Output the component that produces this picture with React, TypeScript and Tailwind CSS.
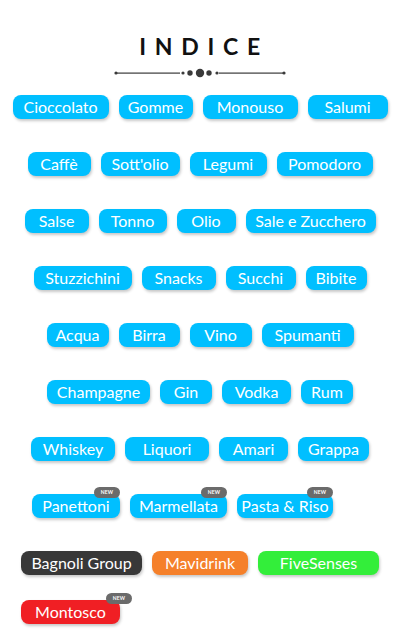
import React from "react";

type Pill = { label: string; w: number; isNew?: boolean };

const rows: Pill[][] = [
  [
    { label: "Cioccolato", w: 96 },
    { label: "Gomme", w: 74 },
    { label: "Monouso", w: 95 },
    { label: "Salumi", w: 80 },
  ],
  [
    { label: "Caffè", w: 63 },
    { label: "Sott'olio", w: 79 },
    { label: "Legumi", w: 77 },
    { label: "Pomodoro", w: 96 },
  ],
  [
    { label: "Salse", w: 64 },
    { label: "Tonno", w: 68 },
    { label: "Olio", w: 59 },
    { label: "Sale e Zucchero", w: 130 },
  ],
  [
    { label: "Stuzzichini", w: 98 },
    { label: "Snacks", w: 74 },
    { label: "Succhi", w: 70 },
    { label: "Bibite", w: 61 },
  ],
  [
    { label: "Acqua", w: 62 },
    { label: "Birra", w: 61 },
    { label: "Vino", w: 62 },
    { label: "Spumanti", w: 92 },
  ],
  [
    { label: "Champagne", w: 103 },
    { label: "Gin", w: 52 },
    { label: "Vodka", w: 69 },
    { label: "Rum", w: 52 },
  ],
  [
    { label: "Whiskey", w: 84 },
    { label: "Liquori", w: 84 },
    { label: "Amari", w: 69 },
    { label: "Grappa", w: 71 },
  ],
];

function NewBadge({ outside }: { outside?: boolean }) {
  return (
    <span
      className={
        "absolute top-[-7px] flex h-[11px] w-[26px] items-center justify-center rounded-full bg-[#6b6b6b] text-[5px] font-bold leading-none tracking-[0.05em] text-white " +
        (outside ? "right-[-12px]" : "right-0")
      }
    >
      NEW
    </span>
  );
}

function BluePill({ p }: { p: Pill }) {
  return (
    <div
      className="relative flex h-[24px] items-center justify-center rounded-lg bg-[#00bfff] text-[16px] leading-none text-white shadow-[1px_2px_3px_rgba(0,0,0,0.22)]"
      style={{ width: p.w }}
    >
      {p.label}
      {p.isNew && <NewBadge />}
    </div>
  );
}

function BrandPill({
  label,
  w,
  color,
  isNew,
}: {
  label: string;
  w: number;
  color: string;
  isNew?: boolean;
}) {
  return (
    <div
      className={
        "relative flex h-[24px] items-center justify-center rounded-lg text-[16px] leading-none text-white shadow-[1px_2px_3px_rgba(0,0,0,0.22)] " +
        color
      }
      style={{ width: w }}
    >
      {label}
      {isNew && <NewBadge outside />}
    </div>
  );
}

function Divider() {
  return (
    <svg width="172" height="10" viewBox="0 0 172 10" className="block">
      <g fill="#3a3a3a">
        <circle cx="2" cy="5" r="1.6" />
        <rect x="2" y="4.5" width="64" height="1.2" />
        <circle cx="69" cy="5" r="1.6" />
        <circle cx="76" cy="5" r="2.7" />
        <circle cx="86" cy="5" r="4.2" />
        <circle cx="95" cy="5" r="2.7" />
        <circle cx="103" cy="5" r="1.6" />
        <rect x="105" y="4.5" width="65" height="1.2" />
        <circle cx="170" cy="5" r="1.6" />
      </g>
    </svg>
  );
}

export default function App() {
  return (
    <div
      className="h-[640px] w-[400px] overflow-hidden bg-white"
      style={{ fontFamily: "Lato, 'Noto Sans', sans-serif" }}
    >
      <div className="flex flex-col items-center pt-[33px]">
        <h1 className="pl-[8px] text-[23px] font-bold leading-[26px] tracking-[0.38em] text-[#111]">
          INDICE
        </h1>
        <div className="mt-[9px]">
          <Divider />
        </div>
      </div>

      <div className="mt-[17px] flex flex-col gap-[33px]">
        {rows.map((row, i) => (
          <div key={i} className="flex justify-center gap-[10px]">
            {row.map((p) => (
              <BluePill key={p.label} p={p} />
            ))}
          </div>
        ))}
        <div className="flex justify-start gap-[10px] pl-[32px]">
          <BluePill p={{ label: "Panettoni", w: 88, isNew: true }} />
          <BluePill p={{ label: "Marmellata", w: 97, isNew: true }} />
          <BluePill p={{ label: "Pasta & Riso", w: 96, isNew: true }} />
        </div>
        <div className="flex flex-col gap-[25px] px-[21px]">
          <div className="flex gap-[10px]">
            <BrandPill label="Bagnoli Group" w={121} color="bg-[#383838]" />
            <BrandPill label="Mavidrink" w={96} color="bg-[#f5802a]" />
            <BrandPill label="FiveSenses" w={121} color="bg-[#33ee3a]" />
          </div>
          <div className="flex gap-[10px]">
            <BrandPill label="Montosco" w={99} color="bg-[#f01f24]" isNew />
          </div>
        </div>
      </div>
    </div>
  );
}
